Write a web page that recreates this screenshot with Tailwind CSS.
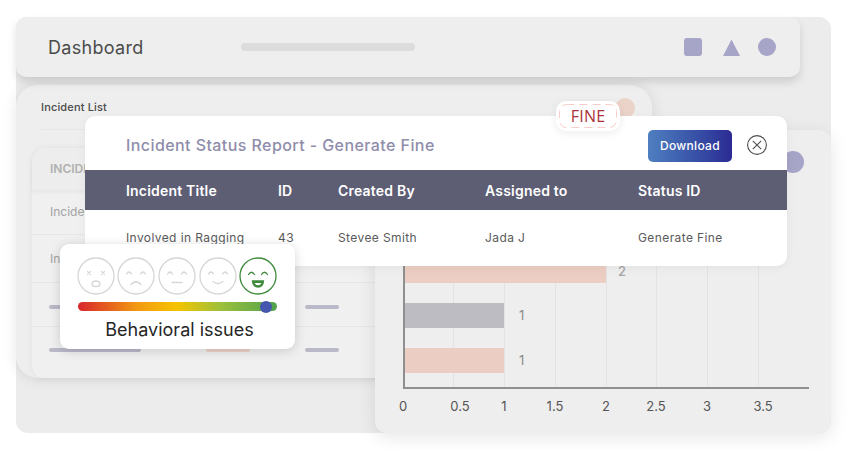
<!DOCTYPE html>
<html lang="en">
<head>
    <meta charset="UTF-8">
    <title>Dashboard</title>
    <script src="https://cdn.jsdelivr.net/npm/@tailwindcss/browser@4"></script>
</head>
<body class="bg-white font-['Inter',sans-serif]">
    <div class="relative w-[850px] h-[450px] overflow-hidden bg-white">
        <!-- back panel -->
        <div class="absolute left-[16px] top-[17px] w-[815px] h-[416px] rounded-[12px] bg-[#ececec]"></div>

        <!-- top bar -->
        <div class="absolute left-[16px] top-[17px] w-[784px] h-[60px] z-10 rounded-[10px] bg-[#eeeeee] shadow-[0_5px_9px_rgba(0,0,0,0.13)] flex items-center pl-[32px]">
            <span class="w-[193px] text-[18px] text-[#4b4b4b] tracking-[0.3px]">Dashboard</span>
            <div class="w-[174px] h-[8px] rounded-full bg-[#dcdcdc]"></div>
            <div class="ml-auto mr-[24px] flex items-center">
                <div class="w-[18px] h-[18px] rounded-[3px] bg-[#a6a4c7]"></div>
                <svg class="ml-[21px]" width="17" height="17" viewBox="0 0 17 17"><path d="M8.5 0.5 L17 17 L0 17 Z" fill="#a6a4c7"/></svg>
                <div class="ml-[18px] w-[18px] h-[18px] rounded-full bg-[#a6a4c7]"></div>
            </div>
        </div>

        <!-- incident list -->
        <div class="absolute left-[16px] top-[85px] w-[636px] h-[293px] rounded-[22px] bg-[#eeeeee] shadow-[0_1px_14px_rgba(0,0,0,0.10)] z-[1] flex flex-col">
            <div class="h-[45px] ml-[25px] pt-[14px] border-b border-[#e6e6e6] text-[11px] font-medium text-[#4a4a4a] tracking-[0.15px]">Incident List</div>
            <div class="mt-[18px] ml-[16px] flex-1 rounded-t-[14px] rounded-bl-[12px] bg-[#f0f0f0] shadow-[0_0_7px_rgba(0,0,0,0.06)] text-[12px] text-[#a3a3a3]">
                <div class="h-[42px] pl-[18px] flex items-center font-semibold text-[#b0b0b0] bg-[#ededed] rounded-t-[14px] shadow-[0_2px_4px_rgba(0,0,0,0.05)]">INCIDENT</div>
                <div class="h-[45px] pl-[18px] flex items-center border-b border-[#e6e6e6]">Incident</div>
                <div class="h-[48px] pl-[18px] flex items-center border-b border-[#e6e6e6]">Incident</div>
                <div class="h-[44px] pl-[17px] pt-[4px] flex items-center border-b border-[#e6e6e6]">
                    <div class="w-[92px] h-[4px] rounded-full bg-[#bab9c8]"></div>
                    <div class="ml-[164px] w-[34px] h-[4px] rounded-full bg-[#bab9c8]"></div>
                </div>
                <div class="h-[46px] pl-[17px] pb-[1px] flex items-center">
                    <div class="w-[92px] h-[4px] rounded-full bg-[#bab9c8]"></div>
                    <div class="ml-[65px] w-[44px] h-[4px] rounded-full bg-[#ecd2c9]"></div>
                    <div class="ml-[55px] w-[34px] h-[4px] rounded-full bg-[#bab9c8]"></div>
                </div>
            </div>
        </div>
        <div class="absolute left-[615px] top-[98px] z-[2] w-[20px] h-[20px] rounded-full bg-[#ecd3c9]"></div>

        <!-- chart card -->
        <div class="absolute left-[375px] top-[130px] w-[456px] h-[303px] z-[3] rounded-[12px] bg-[#eeeeee] shadow-[0_4px_18px_rgba(0,0,0,0.10)]">
            <div class="absolute left-[407px] top-[21px] w-[22px] h-[22px] rounded-full bg-[#a6a4c7]"></div>
            <div class="absolute left-[28px] top-[120px] w-[406px] h-[139px] border-l-2 border-b-2 border-[#8f8f8f]">
                <!-- grid lines -->
                <div class="absolute inset-0 flex pl-[48px]">
                    <div class="w-[51px] h-full border-l border-[#e3e3e3]"></div>
                    <div class="w-[51px] h-full border-l border-[#e3e3e3]"></div>
                    <div class="w-[51px] h-full border-l border-[#e3e3e3]"></div>
                    <div class="w-[51px] h-full border-l border-[#e3e3e3]"></div>
                    <div class="w-[51px] h-full border-l border-[#e3e3e3]"></div>
                    <div class="w-[51px] h-full border-l border-[#e3e3e3]"></div>
                    <div class="w-[51px] h-full border-l border-[#e3e3e3]"></div>
                </div>
                <!-- bars -->
                <div class="relative flex flex-col">
                    <div class="flex items-end h-[33px]">
                        <div class="w-[201px] h-[33px] bg-[#ebcdc3]"></div>
                        <span class="ml-[12px] mb-[4px] text-[13px] leading-[16px] font-medium text-[#a5a5a5]">2</span>
                    </div>
                    <div class="mt-[20px] flex items-center h-[25px]">
                        <div class="w-[99px] h-[25px] bg-[#bdbcc2]"></div>
                        <span class="ml-[15px] pt-[1px] text-[13px] text-[#8a8a8a]">1</span>
                    </div>
                    <div class="mt-[20px] flex items-center h-[25px]">
                        <div class="w-[99px] h-[25px] bg-[#ebcdc3]"></div>
                        <span class="ml-[15px] pt-[1px] text-[13px] text-[#8a8a8a]">1</span>
                    </div>
                </div>
            </div>
            <div class="absolute left-[28px] top-[268px] w-[406px] h-[16px] text-[13px] leading-[16px] text-[#555555]">
                <span class="absolute left-0 -translate-x-1/2">0</span>
                <span class="absolute left-[57px] -translate-x-1/2">0.5</span>
                <span class="absolute left-[101px] -translate-x-1/2">1</span>
                <span class="absolute left-[152px] -translate-x-1/2">1.5</span>
                <span class="absolute left-[203px] -translate-x-1/2">2</span>
                <span class="absolute left-[253px] -translate-x-1/2">2.5</span>
                <span class="absolute left-[304px] -translate-x-1/2">3</span>
                <span class="absolute left-[360px] -translate-x-1/2">3.5</span>
            </div>
        </div>

        <!-- report modal -->
        <div class="absolute left-[85px] top-[116px] w-[702px] h-[150px] z-[4] rounded-[10px] bg-white shadow-[0_2px_10px_rgba(0,0,0,0.05)] flex flex-col">
            <div class="h-[54px] pt-[4px] flex items-center pl-[41px]">
                <span class="text-[16px] font-medium text-[#8f8dab] tracking-[0.42px]">Incident Status Report - Generate Fine</span>
                <div class="ml-auto mt-[2px] w-[84px] h-[32px] rounded-[5px] bg-linear-to-r from-[#4f7fc0] to-[#2b2a93] flex items-center justify-center text-[12px] font-medium text-white tracking-[0.3px]">Download</div>
                <svg class="ml-[15px] mr-[20px]" width="20" height="20" viewBox="0 0 20 20" fill="none" stroke="#4d4d4d" stroke-width="1.1"><circle cx="10" cy="10" r="9.4"/><path d="M5.8 5.8 L14.2 14.2 M14.2 5.8 L5.8 14.2"/></svg>
            </div>
            <div class="h-[40px] bg-[#5d5d74] grid grid-cols-[152px_60px_147px_153px_1fr] items-center pl-[41px] text-[14px] font-semibold text-white tracking-[0.2px]">
                <span>Incident Title</span><span>ID</span><span>Created By</span><span>Assigned to</span><span>Status ID</span>
            </div>
            <div class="pt-[20px] grid grid-cols-[152px_60px_147px_153px_1fr] pl-[41px] text-[12px] leading-[16px] text-[#5a5a5a] tracking-[0.4px]">
                <span>Involved in Ragging</span><span>43</span><span>Stevee Smith</span><span>Jada J</span><span>Generate Fine</span>
            </div>
        </div>

        <!-- fine stamp -->
        <div class="absolute left-[556px] top-[101px] w-[64px] h-[30px] z-[5] rounded-[10px] bg-white shadow-[0_2px_8px_rgba(0,0,0,0.08)] flex items-center justify-center font-['Open_Sans',sans-serif] text-[16px] text-[#a93339] tracking-[0.2px]">
            <svg class="absolute inset-0" width="64" height="30" viewBox="0 0 64 30" fill="none"><rect x="3.500" y="3.500" width="57" height="23" rx="7" stroke="#f6cdc8" stroke-width="1" stroke-dasharray="8 5"/></svg>
            <span class="relative">FINE</span>
        </div>

        <!-- behavioral card -->
        <div class="absolute left-[60px] top-[244px] w-[235px] h-[105px] z-[6] rounded-[9px] bg-white shadow-[0_2px_12px_rgba(0,0,0,0.16)] flex flex-col items-center">
            <div class="mt-[13px] -ml-[1px] flex gap-[2.6px]">
                <svg width="38" height="38" viewBox="0 0 38 38" fill="none" stroke="#d6d6d6" stroke-width="1.3" stroke-linecap="round"><circle cx="19" cy="19" r="18"/><path d="M10.500 14.500 L13.500 17.500 M13.500 14.500 L10.500 17.500 M24.500 14.500 L27.500 17.500 M27.500 14.500 L24.500 17.500"/><path d="M15 27.500 Q15 24 19 24 Q23 24 23 27.500 Q23 29.500 19 29.500 Q15 29.500 15 27.500 Z"/></svg>
                <svg width="38" height="38" viewBox="0 0 38 38" fill="none" stroke="#d6d6d6" stroke-width="1.3" stroke-linecap="round"><circle cx="19" cy="19" r="18"/><path d="M9.500 17 Q12 13 14.500 17 M23.500 17 Q26 13 28.500 17"/><path d="M14 27.500 Q19 22 24 27.500"/></svg>
                <svg width="38" height="38" viewBox="0 0 38 38" fill="none" stroke="#d6d6d6" stroke-width="1.3" stroke-linecap="round"><circle cx="19" cy="19" r="18"/><path d="M9.500 17 Q12 13 14.500 17 M23.500 17 Q26 13 28.500 17"/><path d="M14 25.500 H24"/></svg>
                <svg width="38" height="38" viewBox="0 0 38 38" fill="none" stroke="#d6d6d6" stroke-width="1.3" stroke-linecap="round"><circle cx="19" cy="19" r="18"/><path d="M9.500 17 Q12 13 14.500 17 M23.500 17 Q26 13 28.500 17"/><path d="M14 24.500 Q19 28.500 24 24.500"/></svg>
                <svg width="38" height="38" viewBox="0 0 38 38" fill="none" stroke="#3e8a3c" stroke-width="1.3" stroke-linecap="round"><circle cx="19" cy="19" r="18"/><path d="M9.500 17.500 Q12.500 13 15.500 17.500 M22.500 17.500 Q25.500 13 28.500 17.500"/><path d="M13.500 24 H24.500 Q24 30 19 30 Q14 30 13.500 24 Z" fill="#3e8a3c"/><path d="M15.500 26 H22.500 Q21.500 28.300 19 28.300 Q16.500 28.300 15.500 26 Z" fill="#ffffff" stroke="none"/></svg>
            </div>
            <div class="relative mt-[7px] w-[199px] h-[9px] rounded-full bg-[linear-gradient(90deg,#d8262c_0%,#f39a12_30%,#f5c400_50%,#9cc03c_72%,#4fa24c_100%)]">
                <div class="absolute right-[5px] top-[-1.5px] w-[12px] h-[12px] rounded-full bg-[#4558ae]"></div>
            </div>
            <div class="mt-[8px] ml-[4px] text-[18px] leading-[22px] text-[#262626]">Behavioral issues</div>
        </div>
    </div>
</body>
</html>
